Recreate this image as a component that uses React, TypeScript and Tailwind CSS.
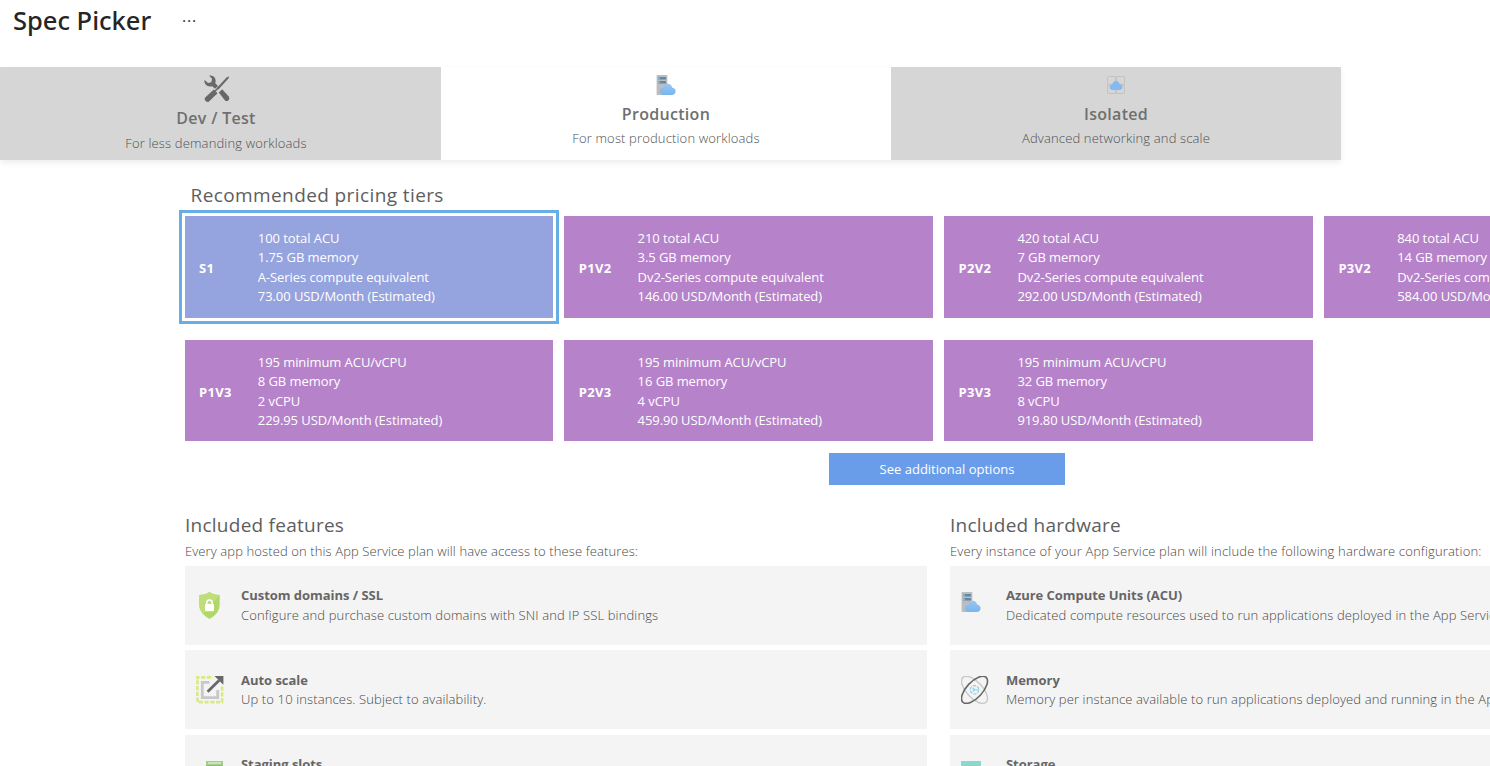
import type { ReactNode } from "react";

type Tier = { name: string; lines: string[]; selected?: boolean };

const tiers: Tier[][] = [
  [
    { name: "S1", lines: ["100 total ACU", "1.75 GB memory", "A-Series compute equivalent", "73.00 USD/Month (Estimated)"], selected: true },
    { name: "P1V2", lines: ["210 total ACU", "3.5 GB memory", "Dv2-Series compute equivalent", "146.00 USD/Month (Estimated)"] },
    { name: "P2V2", lines: ["420 total ACU", "7 GB memory", "Dv2-Series compute equivalent", "292.00 USD/Month (Estimated)"] },
    { name: "P3V2", lines: ["840 total ACU", "14 GB memory", "Dv2-Series compute equivalent", "584.00 USD/Month (Estimated)"] },
  ],
  [
    { name: "P1V3", lines: ["195 minimum ACU/vCPU", "8 GB memory", "2 vCPU", "229.95 USD/Month (Estimated)"] },
    { name: "P2V3", lines: ["195 minimum ACU/vCPU", "16 GB memory", "4 vCPU", "459.90 USD/Month (Estimated)"] },
    { name: "P3V3", lines: ["195 minimum ACU/vCPU", "32 GB memory", "8 vCPU", "919.80 USD/Month (Estimated)"] },
  ],
];

function ToolsIcon() {
  return (
    <svg width="26" height="28" viewBox="0 0 26 28" className="ml-px block">
      <path d="M12.6 13.2 22.5 2.6 24.6 1.4 25.2 2 24 4.1 14.4 14.6Z" fill="#686868" />
      <path d="M9.8 14.6 13.6 18.2 5 26.4Q3.4 27.6 2 26.2L1 25.2Q0 23.8 1.2 22.6Z" fill="#686868" />
      <path d="M10.5 15.5 14.8 11.2 15.8 12.2 11.5 16.7Z" fill="#686868" />
      <path d="M5 .6 Q9.6 0 11.3 3.8 Q12 6 11.3 8.2 L14 11 11 13.8 8.3 11.2 Q4 12.4 1.4 9.2 Q0 7 .4 4.8 L4 8 7.4 7.2 8 3.8Z" fill="#686868" />
      <path d="M14.8 17.6 18.2 14.2 24.8 21.6Q26 23.6 24.6 25.2 23 26.8 21 25.6Z" fill="#686868" />
    </svg>
  );
}

function ServerIcon() {
  return (
    <svg width="20" height="20" viewBox="0 0 20 20" className="block">
      <defs>
        <linearGradient id="cloud" x1="0" y1="0" x2="0" y2="1">
          <stop offset="0" stopColor="#9bc5f3" />
          <stop offset="1" stopColor="#78b5ed" />
        </linearGradient>
      </defs>
      <path d="M1.2 0H11.3V20H1.2Q.6 20 .6 19.2V.8Q.6 0 1.2 0Z" fill="#bdbdbd" />
      <rect x="2" y="2" width="8.2" height="2.6" rx="1.2" fill="#5f89ab" />
      <rect x="2" y="6" width="8.2" height="2.6" rx="1.2" fill="#5f89ab" />
      <circle cx="3.1" cy="3.3" r=".8" fill="#8ae7f8" />
      <circle cx="3.1" cy="7.3" r=".8" fill="#8ae7f8" />
      <path d="M7.6 20C5.4 20 3.9 18.5 3.9 16.4 3.9 14.4 5.3 12.9 7.2 12.8 7.6 10.3 9.4 8.7 11.7 8.7 14 8.7 15.8 10.3 16.1 12.5 18.2 12.7 19.6 14.2 19.6 16.2 19.6 18.4 18 20 15.7 20Z" fill="url(#cloud)" />
    </svg>
  );
}

function IsolatedIcon() {
  return (
    <svg width="18" height="18" viewBox="0 0 18 18" className="mt-px block">
      <g fill="none" stroke="#c2c2c2">
        <rect x=".5" y=".5" width="7.8" height="7.8" rx=".8" />
        <rect x="9.7" y=".5" width="7.8" height="7.8" rx=".8" />
        <rect x=".5" y="9.7" width="7.8" height="7.8" rx=".8" />
        <rect x="9.7" y="9.7" width="7.8" height="7.8" rx=".8" />
      </g>
      <path d="M9 0V18M0 9H18" stroke="#c6c6c6" strokeWidth="1.6" />
      <path d="M5.8 14C4 14 2.7 12.9 2.7 11.2 2.7 9.7 3.8 8.6 5.3 8.4 5.6 6.3 7.1 5 9 5 10.9 5 12.4 6.3 12.7 8.2 14.3 8.4 15.4 9.6 15.4 11.1 15.4 12.8 14.2 14 12.4 14Z" fill="#84baf0" />
    </svg>
  );
}

function ShieldIcon() {
  return (
    <svg width="21" height="27" viewBox="0 0 21 27" className="block">
      <path d="M10.5 0Q14 3 20.7 3V13.5Q20.4 21.5 10.5 27 .6 21.5.3 13.5V3Q7 3 10.5 0Z" fill="#b0d866" />
      <path d="M10.5 0Q14 3 20.7 3L4.1 22Q.4 18 .3 13.5V3Q7 3 10.5 0Z" fill="#bfde7a" />
      <rect x="6" y="12" width="9" height="7.2" rx=".8" fill="#fff" />
      <path d="M7.8 12.5V10.5Q7.9 8 10.5 8T13.2 10.5V12.5" fill="none" stroke="#fff" strokeWidth="1.5" />
    </svg>
  );
}

function ScaleIcon() {
  return (
    <svg width="28" height="28" viewBox="0 0 28 28" className="block">
      <path d="M1.4 3.5V1.4H17M26.1 10.5V26.1H1.4V3.5" fill="none" stroke="#d8e986" strokeWidth="2.6" strokeDasharray="4.2 1.6" />
      <path d="M13.5 6.3H6.3V21.7H21.7V14" fill="none" stroke="#c8c8c8" strokeWidth="2.8" />
      <path d="M11.6 15.8 23 4.6" stroke="#686868" strokeWidth="2.8" />
      <path d="M18.5 0H27.4V8.8L25 6.4 21 2.4Z" fill="#686868" />
    </svg>
  );
}

function SlotsIcon() {
  return (
    <svg width="28" height="28" viewBox="0 0 28 28" className="block">
      <path d="M10 0H27V28H10Z" fill="#a4cf87" />
      <path d="M12 2H25" stroke="#dcedd1" strokeWidth="1.4" />
      <path d="M10 4H27V28H10Z" fill="#91bd74" />
    </svg>
  );
}

function MemoryIcon() {
  return (
    <svg width="28" height="28" viewBox="0 0 28 28" className="block" fill="none">
      <ellipse cx="13.5" cy="13.8" rx="17" ry="8" transform="rotate(47 13.5 13.8)" stroke="#cacaca" strokeWidth="1.5" />
      <ellipse cx="13.5" cy="13.8" rx="17" ry="8" transform="rotate(-47 13.5 13.8)" stroke="#686868" strokeWidth="1.6" />
      <circle cx="13.5" cy="13.8" r="4.2" stroke="#8bcfe7" strokeWidth="1.2" strokeDasharray="3.2 1.2" />
      <path d="M11.7 12 13.7 13.8 11.7 15.3M14.5 13.9H16.5" stroke="#8bcfe7" strokeWidth="1.2" />
    </svg>
  );
}

function StorageIcon() {
  return (
    <svg width="20" height="20" viewBox="0 0 20 20" className="block">
      <path d="M.2 0H19.8V20H.2Z" fill="#bdbdbd" />
      <path d="M.2 0H19.8V4H.2Z" fill="#86dbcd" />
    </svg>
  );
}

function TierCard({ tier, short }: { tier: Tier; short: boolean }) {
  return (
    <div
      className={`flex w-[368.8px] shrink-0 items-center text-white ${short ? "h-[101px]" : "h-[102px]"} ${
        tier.selected ? "bg-[#95a3de] outline-3 outline-offset-3 outline-[#67ade6]" : "bg-[#b682ca]"
      }`}
    >
      <div className="w-[73.3px] pt-1 pl-[14.5px] text-[13px] font-bold tracking-[0.3px]">{tier.name}</div>
      <div className={`text-[13px] tracking-[-0.07px] whitespace-nowrap ${short ? "pt-[2px] leading-[19.3px]" : "pt-[1.3px] leading-[19.4px]"}`}>
        {tier.lines.map((line) => (
          <div key={line}>{line}</div>
        ))}
      </div>
    </div>
  );
}

type TabProps = { icon: ReactNode; title: string; text: string; active?: boolean; tall?: boolean };

function Tab({ icon, title, text, active, tall }: TabProps) {
  return (
    <div className={`flex h-[93px] w-[450px] shrink-0 flex-col items-center pt-2 ${active ? "bg-white" : "bg-[#d6d6d6]"}`}>
      <div className={tall ? "h-[25px]" : "h-[21px]"}>{icon}</div>
      <div className="mt-1.5 text-[16px] leading-[24px] font-semibold tracking-[0.3px] text-[#6f6f6f]">{title}</div>
      <div className={`text-[13px] leading-5 font-light tracking-[0.15px] text-[#505050] ${tall ? "mt-[3px]" : "mt-[2px]"}`}>{text}</div>
    </div>
  );
}

function Row({ icon, title, text }: { icon: ReactNode; title: string; text: string }) {
  return (
    <div className="flex h-[79px] shrink-0 bg-[#f4f4f4]">
      <div className="flex w-14 shrink-0 pt-[26px]">{icon}</div>
      <div className="pt-[19.3px] whitespace-nowrap">
        <div className="text-[13px] leading-5 font-bold tracking-[-0.04px] text-[#666]">{title}</div>
        <div className="mt-[0.6px] text-[13px] leading-[19px] font-light tracking-[0.13px] text-[#484848]">{text}</div>
      </div>
    </div>
  );
}

export default function App() {
  return (
    <main className="h-[766px] w-[1490px] overflow-hidden bg-white font-['Open_Sans','Noto_Sans',sans-serif]">
      <header className="flex h-[67px] items-start pl-[13px]">
        <h1 className="w-[169px] font-['Noto_Sans','Open_Sans',sans-serif] text-[25.5px] leading-[40px] font-medium text-[#252525]">Spec Picker</h1>
        <span className="text-[16px] leading-[33px] tracking-[0.8px] text-[#333]">...</span>
      </header>
      <nav className="flex w-[1341px] shadow-[0_3px_6px_rgba(0,0,0,0.07)]">
        <div className="flex w-[441px] justify-end overflow-hidden">
          <Tab tall icon={<ToolsIcon />} title="Dev / Test" text="For less demanding workloads" />
        </div>
        <Tab active icon={<ServerIcon />} title="Production" text="For most production workloads" />
        <Tab icon={<IsolatedIcon />} title="Isolated" text="Advanced networking and scale" />
      </nav>
      <section className="pl-[184.5px]">
        <h2 className="mt-[21px] ml-1.5 text-[19px] leading-[28px] tracking-[0.4px] text-[#5e5e5e]">Recommended pricing tiers</h2>
        <div className="mt-[7px] flex flex-col gap-[22px]">
          {tiers.map((row, index) => (
            <div key={index} className="flex gap-[11px]">
              {row.map((tier) => (
                <TierCard key={tier.name} tier={tier} short={index === 1} />
              ))}
            </div>
          ))}
        </div>
        <button className="mt-3 ml-[644.5px] block h-8 w-[236px] bg-[#699de9] pt-0.5 text-[13px] text-white">See additional options</button>
      </section>
      <div className="mt-[26px] flex gap-[23px] pl-[185px]">
        <section className="w-[742px] shrink-0">
          <h2 className="text-[19px] leading-[28px] tracking-[0.25px] text-[#5e5e5e]">Included features</h2>
          <p className="mt-[2px] mb-[5px] text-[13px] leading-5 font-light tracking-[0.11px] text-[#484848]">Every app hosted on this App Service plan will have access to these features:</p>
          <div className="flex flex-col gap-[5.3px]">
            <Row icon={<div className="pl-3.5"><ShieldIcon /></div>} title="Custom domains / SSL" text="Configure and purchase custom domains with SNI and IP SSL bindings" />
            <Row icon={<div className="pl-[11px]"><ScaleIcon /></div>} title="Auto scale" text="Up to 10 instances. Subject to availability." />
            <Row icon={<div className="pl-[11px]"><SlotsIcon /></div>} title="Staging slots" text="Up to 5 staging slots to use for testing and deployments before swapping them into production." />
          </div>
        </section>
        <section className="w-[742px] shrink-0">
          <h2 className="text-[19px] leading-[28px] tracking-[0.25px] text-[#5e5e5e]">Included hardware</h2>
          <p className="mt-[2px] mb-[5px] text-[13px] leading-5 font-light tracking-[0.17px] text-[#484848]">Every instance of your App Service plan will include the following hardware configuration:</p>
          <div className="flex flex-col gap-[5.3px]">
            <Row icon={<div className="pl-[11px]"><ServerIcon /></div>} title="Azure Compute Units (ACU)" text="Dedicated compute resources used to run applications deployed in the App Service Plan." />
            <Row icon={<div className="pl-[10.5px]"><MemoryIcon /></div>} title="Memory" text="Memory per instance available to run applications deployed and running in the App Service plan." />
            <Row icon={<div className="pl-[11px]"><StorageIcon /></div>} title="Storage" text="50 GB disk storage shared by all apps deployed in the App Service plan." />
          </div>
        </section>
      </div>
    </main>
  );
}
